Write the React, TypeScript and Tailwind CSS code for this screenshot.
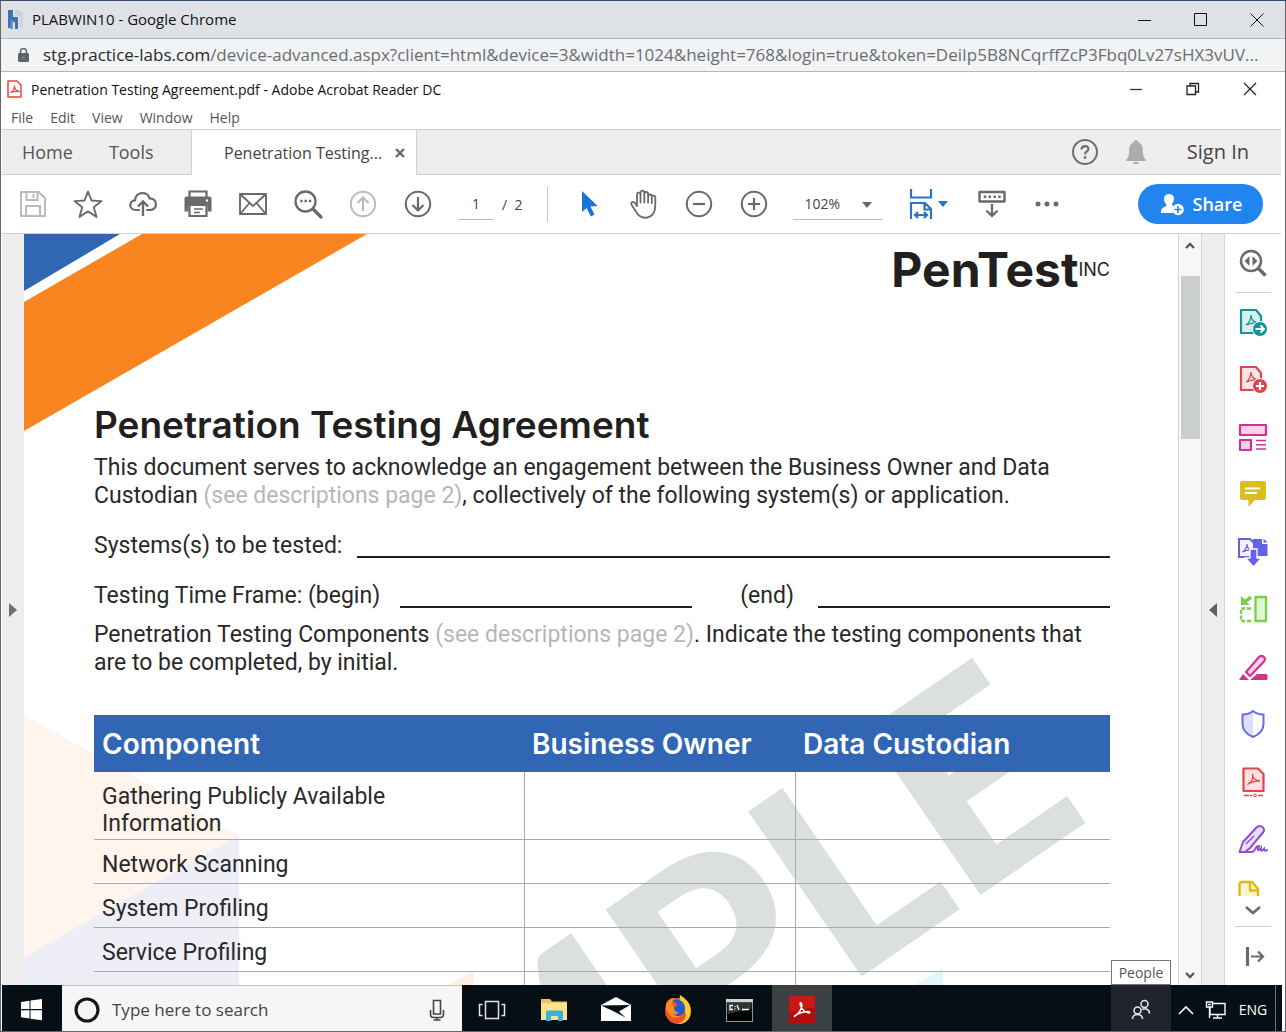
import type { ReactNode } from "react";

const ui = "font-['Open_Sans',sans-serif]";

function Icon({ size = 30, label, children }: { size?: number; label?: string; children: ReactNode }) {
  return (
    <svg width={size} height={size} viewBox={`0 0 ${size} ${size}`} fill="none" aria-hidden={label ? undefined : true} aria-label={label} className="block shrink-0">
      {children}
    </svg>
  );
}

function TitleBar() {
  return (
    <header className="flex h-[38px] shrink-0 items-center border-b border-[#b4b6b9] bg-[#dee1e6] pl-1.5">
      <Icon size={20}>
        <path d="M1 0h5v18H1z" fill="#3f70b2" />
        <path d="M6 7h5v12H8v-7H6z" fill="#3f70b2" />
        <path d="M4 10h2v9H3z" fill="#6d93c6" />
        <path d="M8 0h5v6H8zM12 2h4v16h-3z" fill="#cdd3d5" />
      </Icon>
      <h1 className="ml-[5px] text-[15px] text-[#111]">PLABWIN10 - Google Chrome</h1>
      <div className="ml-auto flex">
        <button aria-label="Minimize" className="flex w-14 justify-center"><Icon size={14}><path d="M0 7.500h13" stroke="#111" /></Icon></button>
        <button aria-label="Maximize" className="flex w-14 justify-center"><Icon size={14}><path d="M.5.5h12v12H.5z" stroke="#111" /></Icon></button>
        <button aria-label="Close" className="flex w-14 justify-center"><Icon size={14}><path d="M.5.5l13 13M13.500.500l-13 13" stroke="#111" /></Icon></button>
      </div>
    </header>
  );
}

function AddressBar() {
  return (
    <div className="flex h-[33px] shrink-0 items-center border-b border-[#b4b6b9] bg-[#f1f3f4] pr-2 pl-[17px]">
      <svg width="11" height="14" viewBox="0 0 11 14" className="shrink-0" aria-label="Secure">
        <rect y="5" width="11" height="9" rx="1.500" fill="#5f6368" />
        <path d="M2.500 6V3.500a3 3 0 0 1 6 0V6" fill="none" stroke="#5f6368" strokeWidth="1.500" />
        <circle cx="5.500" cy="9.500" r="1.200" fill="#85888c" />
      </svg>
      <p className="ml-[14px] truncate text-[17px] text-[#6a6e73]">
        <span className="text-[#27292c]">stg.practice-labs.com</span>
        /device-advanced.aspx?client=html&amp;device=3&amp;width=1024&amp;height=768&amp;login=true&amp;token=DeiIp5B8NCqrffZcP3Fbq0Lv27sHX3vUV...
      </p>
    </div>
  );
}

function AppTitle() {
  return (
    <div className="flex h-8 shrink-0 items-center pl-1">
      <Icon size={18}>
        <path d="M2 1h9l4 4v12H2z" stroke="#e2483d" strokeWidth="1.500" strokeLinejoin="round" />
        <path d="M4.500 12.500c3-1 4-4 4-7 0 3 2 5.500 5 6-3-.5-6 0-9 1z" stroke="#e2483d" strokeWidth="1.300" />
      </Icon>
      <h2 className="ml-[7px] text-[14px] text-[#111]">Penetration Testing Agreement.pdf - Adobe Acrobat Reader DC</h2>
      <div className="mr-[3px] ml-auto flex">
        <button aria-label="Minimize Reader" className="flex w-[57px] justify-center"><Icon size={14}><path d="M1 7.500h12" stroke="#333" strokeWidth="1.300" /></Icon></button>
        <button aria-label="Restore Reader" className="flex w-[57px] justify-center"><Icon size={14}><path d="M1 4h8.500v8.500H1zM4 4V1.500h8.500V10H10" stroke="#222" strokeWidth="1.300" /></Icon></button>
        <button aria-label="Close Reader" className="flex w-[57px] justify-center"><Icon size={14}><path d="M1 1l12 12M13 1L1 13" stroke="#222" strokeWidth="1.200" /></Icon></button>
      </div>
    </div>
  );
}

function MenuBar() {
  return (
    <nav className="flex h-6 shrink-0 items-center gap-[17px] pl-[9px] text-[14px] text-[#555]">
      {["File", "Edit", "View", "Window", "Help"].map((m) => (
        <button key={m}>{m}</button>
      ))}
    </nav>
  );
}

function TabBar() {
  return (
    <div className="flex h-[46px] shrink-0 items-stretch border-y border-[#d0d0d0] bg-[#eeeeee] text-[#555]">
      <div className="flex w-[190px] gap-9 border-r border-[#cfcfcf] pl-5 text-[18px]">
        <button>Home</button>
        <button>Tools</button>
      </div>
      <div className="-mb-px flex w-[225px] items-center justify-between border-r border-[#cfcfcf] bg-white pr-2.5 pl-8 text-[16px] text-[#444]">
        <span>Penetration Testing...</span>
        <button aria-label="Close tab"><Icon size={12}><path d="M2 2l8 8M10 2l-8 8" stroke="#666" strokeWidth="2.200" /></Icon></button>
      </div>
      <div className="ml-auto flex items-center pr-8">
        <button aria-label="Help">
          <Icon size={28}>
            <circle cx="14" cy="14" r="12" stroke="#707070" strokeWidth="2" />
            <path d="M10.500 11.500c0-4.500 7-4.500 7-.5 0 2.500-3.500 2.500-3.500 5.500" stroke="#707070" strokeWidth="2.200" />
            <path d="M12.700 18.300h2.600v2.400h-2.600z" fill="#707070" />
          </Icon>
        </button>
        <button aria-label="Notifications" className="ml-6">
          <Icon size={26}>
            <path d="M13 1c1.500 0 2 1 2 2 5 2 5 7 5 12 0 3 2 4 3 7H3c1-3 3-4 3-7 0-5 0-10 5-12 0-1 .5-2 2-2zM10 23h6c-1 3-5 3-6 0z" fill="#a9aeaa" />
          </Icon>
        </button>
        <button className="ml-[38px] text-[20px] text-[#444]">Sign In</button>
      </div>
    </div>
  );
}

function ToolButton({ label, children }: { label: string; children: ReactNode }) {
  return (
    <button aria-label={label} className="flex h-11 w-[55px] shrink-0 items-center justify-center">
      <Icon>{children}</Icon>
    </button>
  );
}

const g = "#6a6a6a";

function Toolbar() {
  return (
    <div className="flex h-[59px] shrink-0 items-center border-b border-[#d0d0d0] bg-white pl-[3px]">
      <ToolButton label="Save">
        <path d="M3 3h17.500L27 9v18H3zM8.500 3v8h11V3M15.500 5v4M8 27V17h14v10" stroke="#b9bcba" strokeWidth="2" />
      </ToolButton>
      <ToolButton label="Star">
        <path d="M15 2.500l3.500 9 10 .6-7.700 6.200 2.700 9.700-8.500-5.600-8.500 5.600 2.700-9.700-7.700-6.200 10-.6z" stroke={g} strokeWidth="1.900" strokeLinejoin="round" />
      </ToolButton>
      <ToolButton label="Upload to cloud">
        <path d="M11 21H8C.5 21 .5 11.500 7 11.300 7.500 2 20 2 21.500 9.300c8.500 0 8.500 11.700.5 11.700h-3" stroke={g} strokeWidth="2.200" strokeLinecap="round" />
        <path d="M15 27V13M10 17.500l5-5 5 5" stroke={g} strokeWidth="2.300" />
      </ToolButton>
      <ToolButton label="Print">
        <path d="M6.500 8V2.500h17V8" stroke={g} strokeWidth="2.200" />
        <path d="M1.500 9.500a2 2 0 0 1 2-2h23a2 2 0 0 1 2 2v13h-4V16h-19v6.500h-4z" fill={g} />
        <path d="M6.500 16h17v11h-17z" stroke={g} strokeWidth="2.200" fill="white" />
        <path d="M11 20h9M11 23.500h6" stroke={g} strokeWidth="1.500" />
        <circle cx="24" cy="11.500" r="1.200" fill="#fff" />
      </ToolButton>
      <ToolButton label="Email">
        <path d="M2 5h26v20H2zM2.500 5.500L15 17 27.500 5.500M2.500 24.500L11.500 14M27.500 24.500L18.500 14" stroke={g} strokeWidth="1.900" />
      </ToolButton>
      <ToolButton label="Find">
        <circle cx="12.500" cy="12.500" r="10" stroke={g} strokeWidth="2.300" />
        <path d="M20 20l8 8" stroke={g} strokeWidth="3.200" strokeLinecap="round" />
        <path d="M7.200 12h2.400M11.500 12h2.400M15.800 12h2.400" stroke={g} strokeWidth="2.400" />
      </ToolButton>
      <ToolButton label="Previous page">
        <circle cx="15" cy="15" r="12.200" stroke="#b9bcba" strokeWidth="2" />
        <path d="M15 22V9M9.500 14L15 8.500l5.500 5.500" stroke="#b9bcba" strokeWidth="2.200" />
      </ToolButton>
      <ToolButton label="Next page">
        <circle cx="15" cy="15" r="12.200" stroke={g} strokeWidth="2" />
        <path d="M15 8v13M9.500 16l5.500 5.500 5.500-5.500" stroke={g} strokeWidth="2.200" />
      </ToolButton>
      <div className="ml-[13px] flex items-center text-[14px] text-[#444]">
        <input aria-label="Page number" defaultValue="1" className="h-8 w-9 border-b border-[#bbb] bg-transparent text-center outline-none" />
        <span className="ml-2">/&nbsp; 2</span>
      </div>
      <div className="mr-[13px] ml-[25px] h-[35px] w-px bg-[#c8c8c8]" />
      <ToolButton label="Select">
        <path d="M8 2l15.500 15-7 .5 4 8-3.500 2-4.500-8.500L8 23z" fill="#1a73d8" />
      </ToolButton>
      <ToolButton label="Hand">
        <path d="M8 17V5.500c0-2.500 3.500-2.500 3.500 0V3.500c0-2.500 3.800-2.500 3.800 0v1.500c0-2.700 3.800-2.700 3.800 0v2.500c0-2.700 3.700-2.700 3.700 0 0-1 3.500-1.500 3.500 1V16c0 16-15 14.500-18 8.500L3 16.500c-2-3.500 1-4.500 3-2.500l2 3M11.500 5v8.500M15.300 4v9.500M19.100 6v7.500M22.800 8v6" stroke={g} strokeWidth="1.800" strokeLinejoin="round" strokeLinecap="round" />
      </ToolButton>
      <ToolButton label="Zoom out">
        <circle cx="15" cy="15" r="12.200" stroke={g} strokeWidth="2" />
        <path d="M9 15h12" stroke={g} strokeWidth="2.200" />
      </ToolButton>
      <ToolButton label="Zoom in">
        <circle cx="15" cy="15" r="12.200" stroke={g} strokeWidth="2" />
        <path d="M9 15h12M15 9v12" stroke={g} strokeWidth="2.200" />
      </ToolButton>
      <div className="relative ml-3 w-[89px]">
        <select aria-label="Zoom level" className="h-8 w-full appearance-none border-b border-[#bbb] bg-transparent pl-[11px] text-[14px] text-[#444]">
          <option>102%</option>
        </select>
        <svg width="10" height="6" viewBox="0 0 10 6" className="pointer-events-none absolute top-3.5 right-2.5" aria-hidden><path d="M0 0h10L5 6z" fill="#666" /></svg>
      </div>
      <button aria-label="Fit width" className="ml-6 flex items-center">
        <Icon>
          <path d="M5 0v8.500h20V0M5 30V14h14l6 6v10M18.500 14v6.500H25M9 26h12M12 23l-3 3 3 3M18 23l3 3-3 3" stroke="#2a75c0" strokeWidth="2.200" />
        </Icon>
        <svg width="10" height="6" viewBox="0 0 10 6" className="ml-0.5" aria-hidden><path d="M0 0h10L5 6z" fill="#2a75c0" /></svg>
      </button>
      <div className="w-4 shrink-0" />
      <ToolButton label="Hide controls">
        <path d="M2.500 3h25v9.500h-25z" stroke={g} strokeWidth="2.400" strokeLinejoin="round" />
        <path d="M6.800 7.700h17" stroke={g} strokeWidth="2.500" strokeDasharray="2.500 2.300" />
        <path d="M15 15v11M9.500 21.500l5.500 5.500 5.500-5.500" stroke={g} strokeWidth="2.300" />
      </ToolButton>
      <ToolButton label="More tools">
        <circle cx="6" cy="15" r="2.500" fill={g} /><circle cx="15" cy="15" r="2.500" fill={g} /><circle cx="24" cy="15" r="2.500" fill={g} />
      </ToolButton>
      <button className="mr-[18px] ml-auto flex h-10 w-[125px] items-center justify-center gap-2 rounded-full bg-[#2284ee] text-[18px] font-semibold text-white">
        <Icon size={26}>
          <path d="M10 3c6 0 6 7 3 10 0 2 1 2 3 3-2 2-3 4-2 6H2c0-4 1-5 5-7 1-.5 1-1 0-2C4 10 4 3 10 3z" fill="#fff" />
          <circle cx="19" cy="18.500" r="5.800" fill="#fff" />
          <path d="M19 15v7M15.500 18.500h7" stroke="#2284ee" strokeWidth="1.600" />
        </Icon>
        Share
      </button>
    </div>
  );
}

function PageArt() {
  return (
    <svg aria-hidden className="pointer-events-none absolute top-0 left-0 h-[751px] w-[1154px]" viewBox="0 0 1154 751">
      <path d="M0 0h96L0 57z" fill="#3166b4" />
      <path d="M118 0h225L0 197V68z" fill="#f88520" />
      <path d="M0 481l215 120L0 723z" fill="#fff5ed" />
      <path d="M215 601v150H0v-28z" fill="#eeeef7" />
      <path d="M0 744l12 7H0z" fill="#e3f4fd" />
      <path d="M424 751l26-15v15z" fill="#fff0e4" />
      <path d="M891 751l28-17v17z" fill="#e3f5fd" />
      <g transform="translate(984 642) rotate(-34.500)">
        <text x="104" y="0" textAnchor="end" fill="#dce0dd" className="font-['Lato',sans-serif] text-[276px] font-black">SAMPLE</text>
      </g>
    </svg>
  );
}

function Blank({ className }: { className: string }) {
  return <input aria-label="Blank" className={`h-[26px] min-w-0 border-b-2 border-[#231f20] bg-transparent outline-none ${className}`} />;
}

const rows = ["Gathering Publicly Available Information", "Network Scanning", "System Profiling", "Service Profiling"];
const muted = "text-[#b5b7b6]";

function DocumentPage() {
  return (
    <main className="relative min-w-0 flex-1 overflow-hidden bg-white font-['Roboto',sans-serif] text-[23px] leading-7 text-[#2b2829]">
      <PageArt />
      <div className="relative pr-[68px] pl-[70px]">
        <div className="flex h-[72px] justify-end pt-3 font-['Inter',sans-serif] text-[#231f20]">
          <span className="text-[48px] leading-[48px] font-bold">PenTest</span>
          <span className="pt-2.5 text-[18px] leading-7">INC</span>
        </div>
        <h3 className="pt-[95px] font-['Inter',sans-serif] text-[37px] leading-[48px] font-semibold text-[#231f20]">Penetration Testing Agreement</h3>
        <p className="mt-[5px]">
          This document serves to acknowledge an engagement between the Business Owner and Data Custodian{" "}
          <span className={muted}>(see descriptions page 2)</span>, collectively of the following system(s) or application.
        </p>
        <div className="mt-[22px] flex h-7">
          <span>Systems(s) to be tested:</span>
          <Blank className="ml-[15px] flex-1" />
        </div>
        <div className="mt-[22px] flex h-7">
          <span>Testing Time Frame: (begin)</span>
          <Blank className="ml-5 flex-1" />
          <span className="ml-12">(end)</span>
          <Blank className="ml-6 flex-1" />
        </div>
        <p className="mt-[11px]">
          Penetration Testing Components <span className={muted}>(see descriptions page 2)</span>. Indicate the testing components that are to be completed, by initial.
        </p>
        <table className="mt-[38px] w-full table-fixed border-collapse text-left">
          <colgroup>
            <col className="w-[430px]" />
            <col className="w-[271px]" />
            <col />
          </colgroup>
          <thead>
            <tr className="h-[57px] bg-[#3166b4] font-['Inter',sans-serif] text-[28px] text-white">
              <th className="pl-2 font-semibold">Component</th>
              <th className="pl-2 font-semibold">Business Owner</th>
              <th className="pl-2 font-semibold">Data Custodian</th>
            </tr>
          </thead>
          <tbody>
            {rows.map((r) => (
              <tr key={r} className="h-11 border-b border-[#a9abaa] leading-[27px]">
                <td className="border-r border-[#a9abaa] pt-[11px] pr-20 pb-0.5 pl-2 align-top">{r}</td>
                <td className="border-r border-[#a9abaa]" />
                <td />
              </tr>
            ))}
            <tr className="h-11">
              <td className="border-r border-[#a9abaa]" />
              <td className="border-r border-[#a9abaa]" />
              <td />
            </tr>
          </tbody>
        </table>
      </div>
    </main>
  );
}

function Scrollbar() {
  return (
    <div className="flex w-6 shrink-0 flex-col items-center border-x border-[#d4d4d4] bg-[#f7f7f7]">
      <button aria-label="Scroll up" className="flex h-[42px] w-full justify-center pt-1.5"><Icon size={12}><path d="M2 8l4-4 4 4" stroke="#555" strokeWidth="2.300" /></Icon></button>
      <div className="h-[163px] w-[19px] bg-[#cbcfcc]" />
      <button aria-label="Scroll down" className="mt-auto flex h-5 w-full justify-center pt-1"><Icon size={12}><path d="M2 4l4 4 4-4" stroke="#555" strokeWidth="2.300" /></Icon></button>
    </div>
  );
}

const pdf = "M8 18c3-1.500 5-6 5-10 0 4 3 7 7 8-4-.5-8 .5-12 2z";

const tools: { name: string; art: ReactNode }[] = [
  { name: "Export PDF", art: <><path d="M3 3h15l5 6v17H3z" fill="#d7f1ee" stroke="#16939a" strokeWidth="2.200" strokeLinejoin="round" /><path d={pdf} stroke="#16939a" strokeWidth="1.300" /><circle cx="22" cy="22" r="7.500" fill="#16939a" stroke="#fff" /><path d="M17.500 22h8M22.500 18.500L26 22l-3.500 3.500" stroke="#fff" strokeWidth="1.900" /></> },
  { name: "Create PDF", art: <><path d="M3 3h15l5 6v17H3z" fill="#fde3e3" stroke="#dc464e" strokeWidth="2.200" strokeLinejoin="round" /><path d={pdf} stroke="#dc464e" strokeWidth="1.300" /><circle cx="22" cy="22" r="7.500" fill="#dc464e" stroke="#fff" /><path d="M18 22h8M22 18v8" stroke="#fff" strokeWidth="2.200" /></> },
  { name: "Edit PDF", art: <><path d="M2 3h26v10H2zM2 18h11v10H2z" fill="#fbd0e7" stroke="#cf3292" strokeWidth="2.200" strokeLinejoin="round" /><path d="M18 18.500h10M18 22.800h10M18 27h10" stroke="#cf3292" strokeWidth="1.500" /></> },
  { name: "Comment", art: <><path d="M4 2h22a2 2 0 0 1 2 2v15a2 2 0 0 1-2 2H17l-6.500 7V21H4a2 2 0 0 1-2-2V4a2 2 0 0 1 2-2z" fill="#dcbd1f" /><path d="M7 9.500h15M7 14h12" stroke="#fff" strokeWidth="2" /></> },
  { name: "Combine Files", art: <><path d="M15 2h9v5h5.500v12H15z" fill="#6560e4" /><path d="M25.500 1.500l4 4h-4z" fill="#6560e4" /><path d="M1 2h11l4 4v14H1z" fill="#f3f2fe" stroke="#6560e4" strokeWidth="2" /><path d="M4.500 15c3-2 4.500-5 4.500-8 0 3 1 5 4 6-3 0-6 .5-8.500 2z" stroke="#6560e4" strokeWidth="1.200" /><path d="M12 12h7v9h4.500l-8 9-8-9H12z" fill="#6560e4" stroke="#fff" strokeWidth="1.300" /></> },
  { name: "Organize Pages", art: <><path d="M17.500 3H28v24H17.500z" fill="#e1f7d3" stroke="#7bce4b" strokeWidth="2.300" strokeLinejoin="round" /><path d="M13 14.500H3V27h10" stroke="#7bce4b" strokeWidth="2.300" strokeDasharray="4 1.700" /><path d="M3 2v9h9L9 8.500l5-4-2-3-5 4z" fill="#7bce4b" /></> },
  { name: "Redact", art: <><path d="M8 20L21 5c3-3 8 1 5 4.500L12 24z" fill="#fad4e9" stroke="#d9308f" strokeWidth="2.200" strokeLinejoin="round" /><path d="M1 28l4-6 6 6zM12 28l7-6h9a1.500 1.500 0 0 1 1.500 1.500v3A1.500 1.500 0 0 1 28 28z" fill="#d9308f" /></> },
  { name: "Protect", art: <><path d="M15 2C12 4.500 8 5.500 4.500 5.500V15c0 6 4.500 10.500 10.500 13z" fill="#dedffb" /><path d="M15 2c3 2.500 7 3.500 10.500 3.500V15c0 6-4.500 10.500-10.500 13C9 25.500 4.500 21 4.500 15V5.500C8 5.500 12 4.500 15 2z" stroke="#6a6be0" strokeWidth="2" /></> },
  { name: "Optimize PDF", art: <><path d="M5.500 1.500H20l5.500 5.500v17h-20z" fill="#fde0e0" stroke="#dc464e" strokeWidth="2.200" strokeLinejoin="round" /><path d="M9.500 17.500c4-2 6-6 5-10.500 0 4 3 7 7.500 7-5-.5-8 1-12 3z" stroke="#dc464e" strokeWidth="1.300" /><path d="M6 28.500h8M20 28.500h6" stroke="#dc464e" strokeWidth="1.500" strokeDasharray="5 1" /><circle cx="17" cy="28.500" r="1.400" stroke="#dc464e" /></> },
  { name: "Fill & Sign", art: <><path d="M1.500 28L5 18 19 3c4-3 9 2 6 5.500L12 24l-5 4z" fill="#eadffb" stroke="#8f4fd0" strokeWidth="2" strokeLinejoin="round" /><path d="M2 28h12c5-1 2-6 7-6-2 4-1 6 2 2 0 3 0 4 3 1 0 2 1 2 3 1" stroke="#8f4fd0" strokeWidth="2" strokeLinecap="round" /><path d="M8 20l8-8" stroke="#8f4fd0" strokeWidth="1.500" /></> },
];

function ToolsPane() {
  return (
    <aside className="flex w-14 shrink-0 flex-col items-center bg-white">
      <button aria-label="Search tools" className="flex h-[58px] items-center">
        <Icon>
          <circle cx="13" cy="13" r="10" stroke={g} strokeWidth="2.500" />
          <path d="M20.500 20.500l7 7" stroke={g} strokeWidth="3.500" />
          <path d="M11.500 8v10l-5-5zM14.500 8v10l5-5z" fill={g} />
        </Icon>
      </button>
      <div className="h-px w-9 bg-[#cfcfcf]" />
      <div className="flex min-h-0 flex-1 flex-col">
        {tools.map((t) => (
          <button key={t.name} aria-label={t.name} className="flex min-h-0 flex-1 items-center"><Icon>{t.art}</Icon></button>
        ))}
      </div>
      <div className="flex h-[117px] w-full flex-col items-center">
        <button aria-label="Send for comments" className="mt-3 mr-2 h-4 overflow-hidden">
          <Icon size={26}>
            <path d="M3.500 18V4a2 2 0 0 1 2-2H16l6 7v9" fill="#fbf3cf" stroke="#dcba12" strokeWidth="2.400" />
            <path d="M14 2v8.500h8" stroke="#dcba12" strokeWidth="2.400" />
          </Icon>
        </button>
        <button aria-label="More" className="mt-1.5"><Icon size={16}><path d="M1 5l7 6 7-6" stroke={g} strokeWidth="2.600" /></Icon></button>
        <div className="mt-2 h-px w-9 shrink-0 bg-[#cfcfcf]" />
        <button aria-label="Collapse pane" className="mt-5 ml-1">
          <Icon size={20}><path d="M2.500 0v19" stroke={g} strokeWidth="3.200" /><path d="M6 9.500h12M13 4.500l5 5-5 5" stroke={g} strokeWidth="2.200" /></Icon>
        </button>
      </div>
    </aside>
  );
}

function TaskButton({ label, active, children }: { label: string; active?: boolean; children: ReactNode }) {
  return (
    <button aria-label={label} className={`flex w-[60px] shrink-0 items-center justify-center pt-1 ${active ? "bg-[#3b4142]" : ""}`}>
      <Icon>{children}</Icon>
    </button>
  );
}

function Taskbar() {
  return (
    <footer className="mr-[3px] flex h-[46px] shrink-0 bg-[#060f16] text-white">
      <TaskButton label="Start">
        <path d="M4 7l8.500-1.200V14H4zM13.500 5.600L25 4v10H13.500zM4 15.200h8.500v8.300L4 22.300zM13.500 15.200H25v10l-11.500-1.500z" fill="#fff" />
      </TaskButton>
      <div className="flex w-[400px] items-center border-t border-[#c2c4c3] bg-[#f6f6f6] pt-[3px] pr-4 pl-3">
        <Icon size={26}><circle cx="13" cy="13" r="11" stroke="#161616" strokeWidth="3.200" /></Icon>
        <input aria-label="Search" placeholder="Type here to search" className="ml-3 min-w-0 flex-1 bg-transparent text-[17px] text-[#444] outline-none placeholder:text-[#444]" />
        <svg width="18" height="24" viewBox="0 0 18 24" fill="none" stroke="#444" strokeWidth="1.600" aria-label="Voice search">
          <path d="M5.500 2.500h7V16h-7zM2.500 12v4.500c0 2 1 3 3 3h7c2 0 3-1 3-3V12M9 19.500V22M5.500 22h7" />
        </svg>
      </div>
      <div className="flex gap-0.5">
        <TaskButton label="Task View">
          <path d="M8.500 6.500h13v17h-13zM5.500 9.500h-3v11h3M24.500 9.500h3v11h-3" stroke="#dfe3e6" strokeWidth="1.500" />
        </TaskButton>
        <TaskButton label="File Explorer">
          <path d="M2 4h9l2 2.500h15V25H2z" fill="#e9c55f" />
          <path d="M2 8h26v17H2z" fill="#fde28c" />
          <path d="M7 17a1.500 1.500 0 0 1 1.500-1.500h14A1.500 1.500 0 0 1 24 17v9h-5v-5h-7v5H7z" fill="#3fb0dc" />
        </TaskButton>
        <TaskButton label="Mail">
          <path d="M0 10L15 2l15 8v16H0z" fill="#fff" />
          <path d="M0 10.500l29-.5-11 6.500 6.500 6L12 16z" fill="#060f16" />
        </TaskButton>
        <TaskButton label="Firefox">
          <circle cx="15" cy="16" r="13" fill="#f4502c" />
          <path d="M17 0c7 4 12 10 10.500 19-1 7-7 10.500-13 10 6-2 9-5 8-11-1-5-7-9-5.500-18z" fill="#fecb2c" />
          <path d="M3 9c2-5 5-6 9-6l-3 5 3 4 9 3c0 6-8 10-13 6C5 18 2 14 3 9z" fill="#ff8b1e" />
          <path d="M9 6c8-4 14 2 13 9-1 6-8 8-12 4 3 1 5 0 5-2-3 0-4-2-4-5l4-2-3-3z" fill="#285bc5" />
        </TaskButton>
        <TaskButton label="Command Prompt">
          <path d="M1 4h27v23H1z" fill="#8f9598" /><path d="M1 4h27v3H1z" fill="#cfd4d6" /><path d="M2 7.500h25V26H2z" fill="#020303" />
          <path d="M2.500 8h24v6l-24 5z" fill="#303435" />
          <path d="M8 10.500H5v4h3M10 11v1M10 13.500v1M12 10l2 5M17 14.500h7" stroke="#fff" strokeWidth="1.300" />
        </TaskButton>
        <TaskButton label="Acrobat Reader" active>
          <path d="M2 1h26v27H2z" fill="#b40c0c" /><path d="M2 1h26v11L2 17z" fill="#cc1814" />
          <path d="M7 21.500c4-2 9-8 7.500-13-.7-2-2-.5-1 2 1.500 4 5 7.500 9 7.500 1.500-3-11-1-15.500 3.500z" stroke="#fff" strokeWidth="1.600" />
        </TaskButton>
      </div>
      <div className="ml-auto flex">
        <div className="relative flex">
          <div role="tooltip" className="absolute bottom-full left-0 flex h-[25px] w-[60px] items-center justify-center border border-[#767676] bg-white text-[14px] text-[#555]">People</div>
          <button aria-label="People" className="flex w-[60px] items-center justify-center bg-[#20242f] pt-1">
            <Icon size={22}>
              <g stroke="#e7e9ec" strokeWidth="1.500"><circle cx="14.500" cy="5" r="3.500" /><circle cx="7.500" cy="11.500" r="3.500" /><path d="M2.500 20c0-6 10-6 10 0M12 10.500c3-2 7.500 0 7.500 4" /></g>
            </Icon>
          </button>
        </div>
        <button aria-label="Show hidden icons" className="flex w-[30px] items-center justify-center pt-1"><Icon size={16}><path d="M1 12l7-7 7 7" stroke="#fff" strokeWidth="1.600" /></Icon></button>
        <button aria-label="Network" className="flex w-[30px] items-center justify-center pt-1">
          <Icon size={22}><path d="M7 4.500h13v11H5V9M12.500 15.500V19M8 19h9M1.500 3h6v5h-6zM3 5.500h3M4.500 8v11" stroke="#fff" strokeWidth="1.400" /></Icon>
        </button>
        <button className="w-11 pt-0.5 text-center text-[14px]">ENG</button>
        <div className="w-[7px] border-l border-[#6c7276]" />
      </div>
    </footer>
  );
}

export default function App() {
  return (
    <div className={`flex h-screen flex-col overflow-hidden border-t border-b border-l border-t-[#35506f] border-b-[#666] border-l-[#666] bg-white ${ui}`}>
      <div className="flex min-h-0 flex-1 flex-col border-r border-[#666]">
        <TitleBar />
        <AddressBar />
        <div className="flex min-h-0 flex-1 flex-col pt-px pl-px">
          <div className="mr-1 flex min-h-0 flex-1 flex-col">
            <AppTitle />
            <MenuBar />
            <TabBar />
            <Toolbar />
            <div className="flex min-h-0 flex-1">
              <button aria-label="Open navigation pane" className="flex w-[22px] shrink-0 items-center justify-center bg-[#eeeeee]">
                <svg width="8" height="14" viewBox="0 0 8 14" aria-hidden><path d="M0 0l8 7-8 7z" fill="#707070" /></svg>
              </button>
              <DocumentPage />
              <Scrollbar />
              <button aria-label="Close tools pane" className="flex w-[23px] shrink-0 items-center justify-center border-r border-[#d4d4d4] bg-[#eeeeee]">
                <svg width="8" height="14" viewBox="0 0 8 14" aria-hidden><path d="M8 0L0 7l8 7z" fill="#606060" /></svg>
              </button>
              <ToolsPane />
            </div>
          </div>
          <Taskbar />
        </div>
      </div>
    </div>
  );
}
